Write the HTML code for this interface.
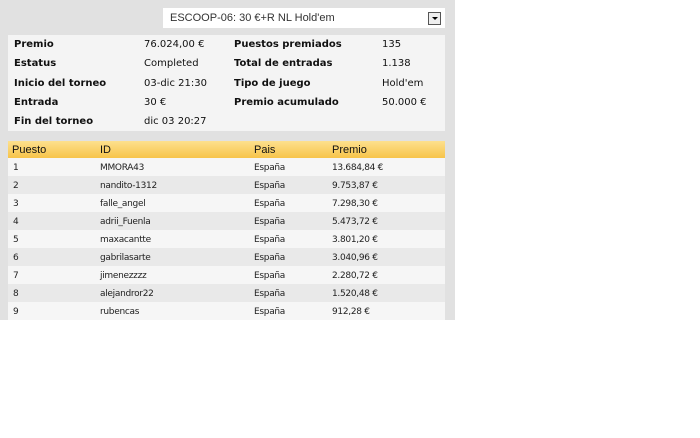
<!DOCTYPE html>
<html><head><style>
body{margin:0;background:#fff;width:700px;height:438px;position:relative;font-family:"DejaVu Sans",Verdana,sans-serif;overflow:hidden}
#panel{position:absolute;left:0;top:0;width:455px;height:320px;background:#e1e1e1}
#sel{position:absolute;left:163px;top:8px;width:282px;height:20px;background:#fff;font-family:"Liberation Sans",Arial,sans-serif;font-size:11px;color:#333;line-height:20px}
#sel span{position:absolute;left:7px}
#arr{position:absolute;right:4px;top:4px;width:11px;height:11px;border:1px solid #555;background:#eee}
#arr:after{content:"";position:absolute;left:3px;top:4px;border-left:3px solid transparent;border-right:3px solid transparent;border-top:3px solid #000}
#info{position:absolute;left:8px;top:35px;width:437px;height:96px;background:#f4f4f4;font-size:10px;color:#111}
.t{position:absolute;white-space:nowrap}
.b{font-weight:bold}
#hdr{position:absolute;left:8px;top:141px;width:437px;height:17px;background:linear-gradient(#fde08e,#f7c44a);font-family:"Liberation Sans",Arial,sans-serif;font-size:11px;color:#111}
.r{position:absolute;left:8px;width:437px;height:18px;font-size:9px;color:#222;font-family:"DejaVu Sans",Tahoma,sans-serif;letter-spacing:-0.3px}
.r span{position:absolute;line-height:20px}
#hdr span{position:absolute;line-height:18px}
</style></head><body>
<div id="panel"></div>
<div id="sel"><span>ESCOOP-06: 30 €+R NL Hold'em</span><div id="arr"></div></div>
<div id="info">
<div class="t b" style="left:6px;top:4px">Premio</div><div class="t" style="left:136px;top:4px">76.024,00 €</div><div class="t b" style="left:226px;top:4px">Puestos premiados</div><div class="t" style="left:374px;top:4px">135</div>
<div class="t b" style="left:6px;top:23px">Estatus</div><div class="t" style="left:136px;top:23px">Completed</div><div class="t b" style="left:226px;top:23px">Total de entradas</div><div class="t" style="left:374px;top:23px">1.138</div>
<div class="t b" style="left:6px;top:43px">Inicio del torneo</div><div class="t" style="left:136px;top:43px">03-dic 21:30</div><div class="t b" style="left:226px;top:43px">Tipo de juego</div><div class="t" style="left:374px;top:43px">Hold'em</div>
<div class="t b" style="left:6px;top:62px">Entrada</div><div class="t" style="left:136px;top:62px">30 €</div><div class="t b" style="left:226px;top:62px">Premio acumulado</div><div class="t" style="left:374px;top:62px">50.000 €</div>
<div class="t b" style="left:6px;top:81px">Fin del torneo</div><div class="t" style="left:136px;top:81px">dic 03 20:27</div>
</div>
<div id="hdr"><span style="left:4px">Puesto</span><span style="left:92px">ID</span><span style="left:246px">Pais</span><span style="left:324px">Premio</span></div>
<div class="r" style="top:158px;background:#f6f6f6"><span style="left:5px">1</span><span style="left:92px">MMORA43</span><span style="left:246px">España</span><span style="left:324px">13.684,84 €</span></div>
<div class="r" style="top:176px;background:#e9e9e9"><span style="left:5px">2</span><span style="left:92px">nandito-1312</span><span style="left:246px">España</span><span style="left:324px">9.753,87 €</span></div>
<div class="r" style="top:194px;background:#f6f6f6"><span style="left:5px">3</span><span style="left:92px">falle_angel</span><span style="left:246px">España</span><span style="left:324px">7.298,30 €</span></div>
<div class="r" style="top:212px;background:#e9e9e9"><span style="left:5px">4</span><span style="left:92px">adrii_Fuenla</span><span style="left:246px">España</span><span style="left:324px">5.473,72 €</span></div>
<div class="r" style="top:230px;background:#f6f6f6"><span style="left:5px">5</span><span style="left:92px">maxacantte</span><span style="left:246px">España</span><span style="left:324px">3.801,20 €</span></div>
<div class="r" style="top:248px;background:#e9e9e9"><span style="left:5px">6</span><span style="left:92px">gabrilasarte</span><span style="left:246px">España</span><span style="left:324px">3.040,96 €</span></div>
<div class="r" style="top:266px;background:#f6f6f6"><span style="left:5px">7</span><span style="left:92px">jimenezzzz</span><span style="left:246px">España</span><span style="left:324px">2.280,72 €</span></div>
<div class="r" style="top:284px;background:#e9e9e9"><span style="left:5px">8</span><span style="left:92px">alejandror22</span><span style="left:246px">España</span><span style="left:324px">1.520,48 €</span></div>
<div class="r" style="top:302px;background:#f6f6f6"><span style="left:5px">9</span><span style="left:92px">rubencas</span><span style="left:246px">España</span><span style="left:324px">912,28 €</span></div>
</body></html>
